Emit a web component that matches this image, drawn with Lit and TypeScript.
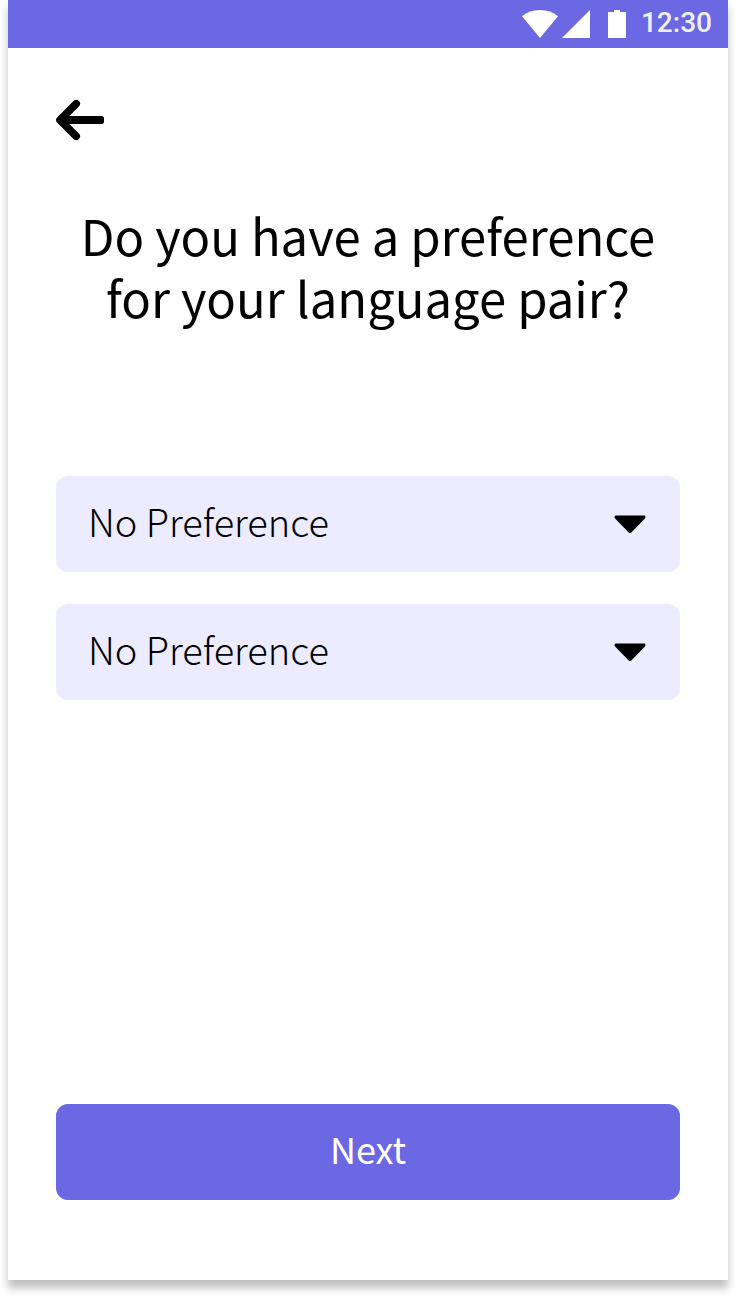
import { LitElement, html, css } from "lit";
import { customElement, property } from "lit/decorators.js";

@customElement("status-bar")
class StatusBar extends LitElement {
  @property() time = "12:30";

  static styles = css`
    :host {
      display: flex;
      align-items: center;
      justify-content: flex-end;
      gap: 15px;
      height: 48px;
      padding: 0 16px;
      background: #6c68e4;
      color: #fff;
    }
    .icons {
      display: block;
      width: 104px;
      height: 28px;
    }
    .time {
      padding-bottom: 2px;
      font: 500 28px/44px Roboto, sans-serif;
      opacity: 0.9;
    }
  `;

  render() {
    return html`
      <svg class="icons" viewBox="0 0 104 28" fill="currentColor" aria-hidden="true">
        <path d="M0 6.2C5 2.200 11 0 18 0s13 2.200 18 6.200L18 28z" />
        <path d="M68 0v28H40z" />
        <path d="M86 2h6V0h6v2h6v26H86z" />
      </svg>
      <span class="time">${this.time}</span>
    `;
  }
}

@customElement("language-select")
class LanguageSelect extends LitElement {
  @property() label = "";

  static styles = css`
    :host {
      display: block;
    }
    .field {
      display: grid;
      align-items: center;
    }
    .select,
    .caret {
      grid-area: 1 / 1;
    }
    .select {
      appearance: none;
      box-sizing: border-box;
      width: 100%;
      height: 96px;
      padding: 0 80px 8px 32px;
      border: 0;
      border-radius: 12px;
      background: #edebff;
      color: #000;
      font: inherit;
      font-size: 38px;
      font-weight: 300;
      cursor: pointer;
    }
    .caret {
      justify-self: end;
      width: 32px;
      height: 18px;
      margin-right: 34px;
      pointer-events: none;
    }
  `;

  render() {
    return html`
      <div class="field">
        <select class="select" aria-label=${this.label}>
          <option>No Preference</option>
        </select>
        <svg class="caret" viewBox="0 0 32 18" aria-hidden="true">
          <path d="M2.200.6h27.600c1.700 0 2.200 1.700 1.100 2.800L17.600 17.200c-.9.900-2.300.9-3.200 0L1.100 3.400C0 2.300.5.6 2.200.6z" />
        </svg>
      </div>
    `;
  }
}

@customElement("app-root")
class AppRoot extends LitElement {
  static styles = css`
    :host {
      display: flex;
      box-sizing: border-box;
      min-height: 100vh;
      padding: 0 8px 16px;
      background: #fff;
      color: #000;
      font-family: "Noto Sans CJK SC", "Noto Sans", sans-serif;
    }
    .screen {
      flex: 1;
      display: flex;
      flex-direction: column;
      background: #fff;
      box-shadow: 0 8px 8px rgba(0, 0, 0, 0.25);
    }
    .content {
      flex: 1;
      display: flex;
      flex-direction: column;
      padding: 48px 48px 80px;
    }
    .back {
      align-self: flex-start;
      padding: 0;
      border: 0;
      background: none;
      color: inherit;
      cursor: pointer;
    }
    .arrow {
      display: block;
      width: 48px;
      height: 48px;
    }
    .title {
      margin: 60px 0 0;
      font-size: 49px;
      line-height: 62px;
      font-weight: 400;
      text-align: center;
      text-wrap: balance;
    }
    .fields {
      display: grid;
      gap: 32px;
      margin-top: 148px;
    }
    .next {
      height: 96px;
      margin-top: auto;
      padding: 0 0 8px;
      border: 0;
      border-radius: 12px;
      background: #6c68e4;
      color: #fff;
      font: inherit;
      font-size: 36px;
      cursor: pointer;
    }
  `;

  render() {
    return html`
      <div class="screen">
        <status-bar></status-bar>
        <main class="content">
          <button class="back" type="button" aria-label="Back">
            <svg class="arrow" viewBox="0 0 48 48" fill="none" stroke="currentColor" aria-hidden="true">
              <path d="M20.200 7.800L4 24L20.200 40.200" stroke-width="7.600" stroke-linecap="round" stroke-linejoin="round" />
              <path d="M6 24H42" stroke-width="8" />
              <path d="M42 22.500H45.500V25.500H42z" fill="currentColor" stroke-width="5" stroke-linejoin="round" />
            </svg>
          </button>
          <h1 class="title">Do you have a preference for your language pair?</h1>
          <div class="fields">
            <language-select label="First language"></language-select>
            <language-select label="Second language"></language-select>
          </div>
          <button class="next" type="button">Next</button>
        </main>
      </div>
    `;
  }
}
